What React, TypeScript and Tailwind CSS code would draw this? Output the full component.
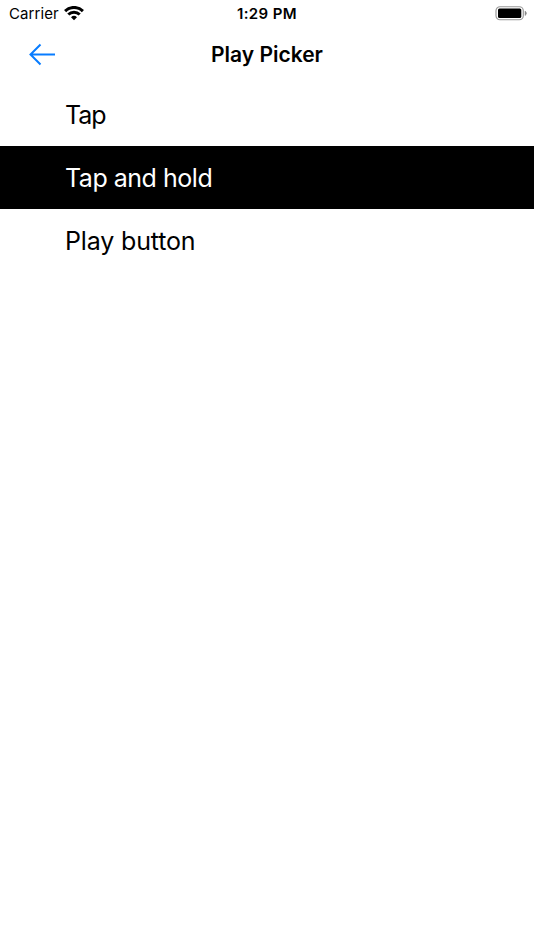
import { useState } from 'react'

const options = [
  { id: 'tap', label: 'Tap', className: 'tracking-[-1.1px]' },
  { id: 'hold', label: 'Tap and hold', className: 'tracking-[-0.48px]' },
  { id: 'button', label: 'Play button', className: 'tracking-[-0.15px]' },
]

function StatusBar() {
  return (
    <div className="grid h-7 grid-cols-3 items-center pl-[9px] pr-[7px] text-[15px] leading-7">
      <div className="flex items-center gap-[6px]">
        <span className="tracking-[0.1px]">Carrier</span>
        <svg className="-mt-[2px] -ml-px" width="20" height="15" viewBox="0 0 20 15" fill="none" stroke="black" strokeWidth="3">
          <path d="M1.1 5.1a12.6 12.6 0 0 1 17.8 0" />
          <path d="M4.3 8.5a8.1 8.1 0 0 1 11.4 0" />
          <path d="M10 14.3l-3-3a4.3 4.3 0 0 1 6 0z" fill="black" stroke="none" />
        </svg>
      </div>
      <div className="-ml-[2px] text-center font-semibold tracking-[0.4px]">1:29 PM</div>
      <div className="flex justify-end">
        <svg width="32" height="16" viewBox="0 0 32 16">
          <rect x="1" y="0.75" width="27.3" height="13" rx="4" fill="none" stroke="#999" strokeWidth="1.2" />
          <rect x="3" y="2.6" width="23.3" height="9.3" rx="1.5" />
          <path d="M30 5a2.6 2.6 0 0 1 0 4.6z" fill="#888" stroke="#888" strokeWidth="0.5" />
        </svg>
      </div>
    </div>
  )
}

export default function App() {
  const [selected, setSelected] = useState('hold')

  return (
    <div className="min-h-screen bg-white font-['Inter',sans-serif] text-black">
      <StatusBar />
      <header className="grid h-[55px] grid-cols-[80px_1fr_80px] items-center pb-[2px]">
        <button className="pl-[29px]" aria-label="Back">
          <svg width="27" height="24" viewBox="0 0 27 24" fill="none" stroke="#087cff" strokeWidth="2">
            <path d="M26 11.5H1.5M11.5 1.5l-10 10 10 10" />
          </svg>
        </button>
        <h1 className="text-center text-[21px] font-semibold">Play Picker</h1>
      </header>
      <div>
        {options.map((option) => (
          <button
            key={option.id}
            onClick={() => setSelected(option.id)}
            className={`block h-[63px] w-full pt-[3px] pl-[65px] text-left text-[25px] ${option.className} ${
              selected === option.id ? 'bg-black text-white' : ''
            }`}
          >
            {option.label}
          </button>
        ))}
      </div>
    </div>
  )
}
